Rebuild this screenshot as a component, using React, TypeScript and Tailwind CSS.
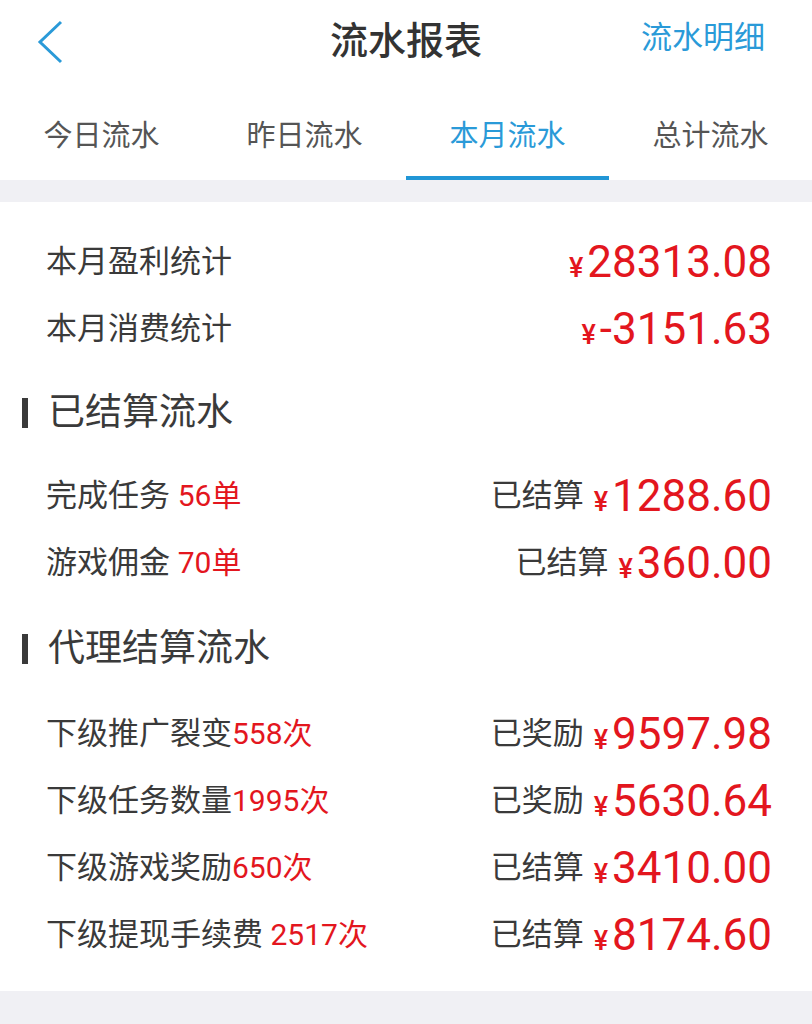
const font = "font-['Roboto','Noto_Sans_CJK_SC',sans-serif]";

const tabs = ['今日流水', '昨日流水', '本月流水', '总计流水'];

const settled = [
  { label: '完成任务 ', count: '56单', status: '已结算', amount: '1288.60' },
  { label: '游戏佣金 ', count: '70单', status: '已结算', amount: '360.00' },
];

const agent = [
  { label: '下级推广裂变', count: '558次', status: '已奖励', amount: '9597.98' },
  { label: '下级任务数量', count: '1995次', status: '已奖励', amount: '5630.64' },
  { label: '下级游戏奖励', count: '650次', status: '已结算', amount: '3410.00' },
  { label: '下级提现手续费', count: ' 2517次', status: '已结算', amount: '8174.60' },
];

function Amount({ value }: { value: string }) {
  return (
    <span className="flex items-baseline text-[#e3161e] mt-[4px]">
      <span className="text-[27px] font-medium mr-[4px]">¥</span>
      <span className="text-[44px] leading-none">{value}</span>
    </span>
  );
}

function SectionTitle({ title, h }: { title: string; h: string }) {
  return (
    <div className={`flex items-center pl-[22px] ${h}`}>
      <div className="w-[6px] h-[30px] bg-[#3a3a3a]" />
      <span className="ml-[20px] text-[37px] text-[#3a3a3a]">{title}</span>
    </div>
  );
}

function Row({ label, count, status, amount }: { label: string; count: string; status: string; amount: string }) {
  return (
    <div className="flex items-center justify-between h-[67px] pl-[46px] pr-[40px]">
      <span className="text-[31px] text-[#3a3a3a] whitespace-pre">
        {label}
        <span className="text-[#e3161e] text-[30px]">{count}</span>
      </span>
      <span className="flex items-center">
        <span className="text-[31px] text-[#3a3a3a] mr-[10px]">{status}</span>
        <Amount value={amount} />
      </span>
    </div>
  );
}

export default function App() {
  return (
    <div className={`w-[812px] h-[1024px] bg-[#f0f0f4] flex flex-col ${font}`}>
      <div className="bg-white">
        <div className="relative h-[82px] flex items-center justify-center">
          <svg className="absolute left-[34px] top-[20px]" width="32" height="44" viewBox="0 0 32 44">
            <path d="M27 2 L6 22 L27 42" fill="none" stroke="#2a9ad8" strokeWidth="3" />
          </svg>
          <span className="text-[38px] font-medium text-[#333333]">流水报表</span>
          <span className="absolute right-[47px] top-[15px] text-[31px] text-[#2a9ad8]">流水明细</span>
        </div>
        <div className="flex h-[98px]">
          {tabs.map((t, i) => (
            <div key={t} className="flex-1 flex flex-col items-center">
              <span className={`mt-[34px] leading-[40px] text-[29px] ${i === 2 ? 'text-[#2a9ad8]' : 'text-[#555555]'}`}>{t}</span>
              <div className={`mt-auto h-[4px] w-full ${i === 2 ? 'bg-[#2196d6]' : ''}`} />
            </div>
          ))}
        </div>
      </div>

      <div className="mt-[22px] bg-white pt-[27px] pb-[22px]">
        <div className="flex items-center justify-between h-[67px] pl-[46px] pr-[40px]">
          <span className="text-[31px] text-[#3a3a3a]">本月盈利统计</span>
          <Amount value="28313.08" />
        </div>
        <div className="flex items-center justify-between h-[67px] pl-[46px] pr-[40px]">
          <span className="text-[31px] text-[#3a3a3a]">本月消费统计</span>
          <Amount value="-3151.63" />
        </div>

        <SectionTitle title="已结算流水" h="h-[100px]" />
        {settled.map((r) => (
          <Row key={r.label} {...r} />
        ))}

        <SectionTitle title="代理结算流水" h="h-[104px]" />
        {agent.map((r) => (
          <Row key={r.label} {...r} />
        ))}
      </div>
    </div>
  );
}
